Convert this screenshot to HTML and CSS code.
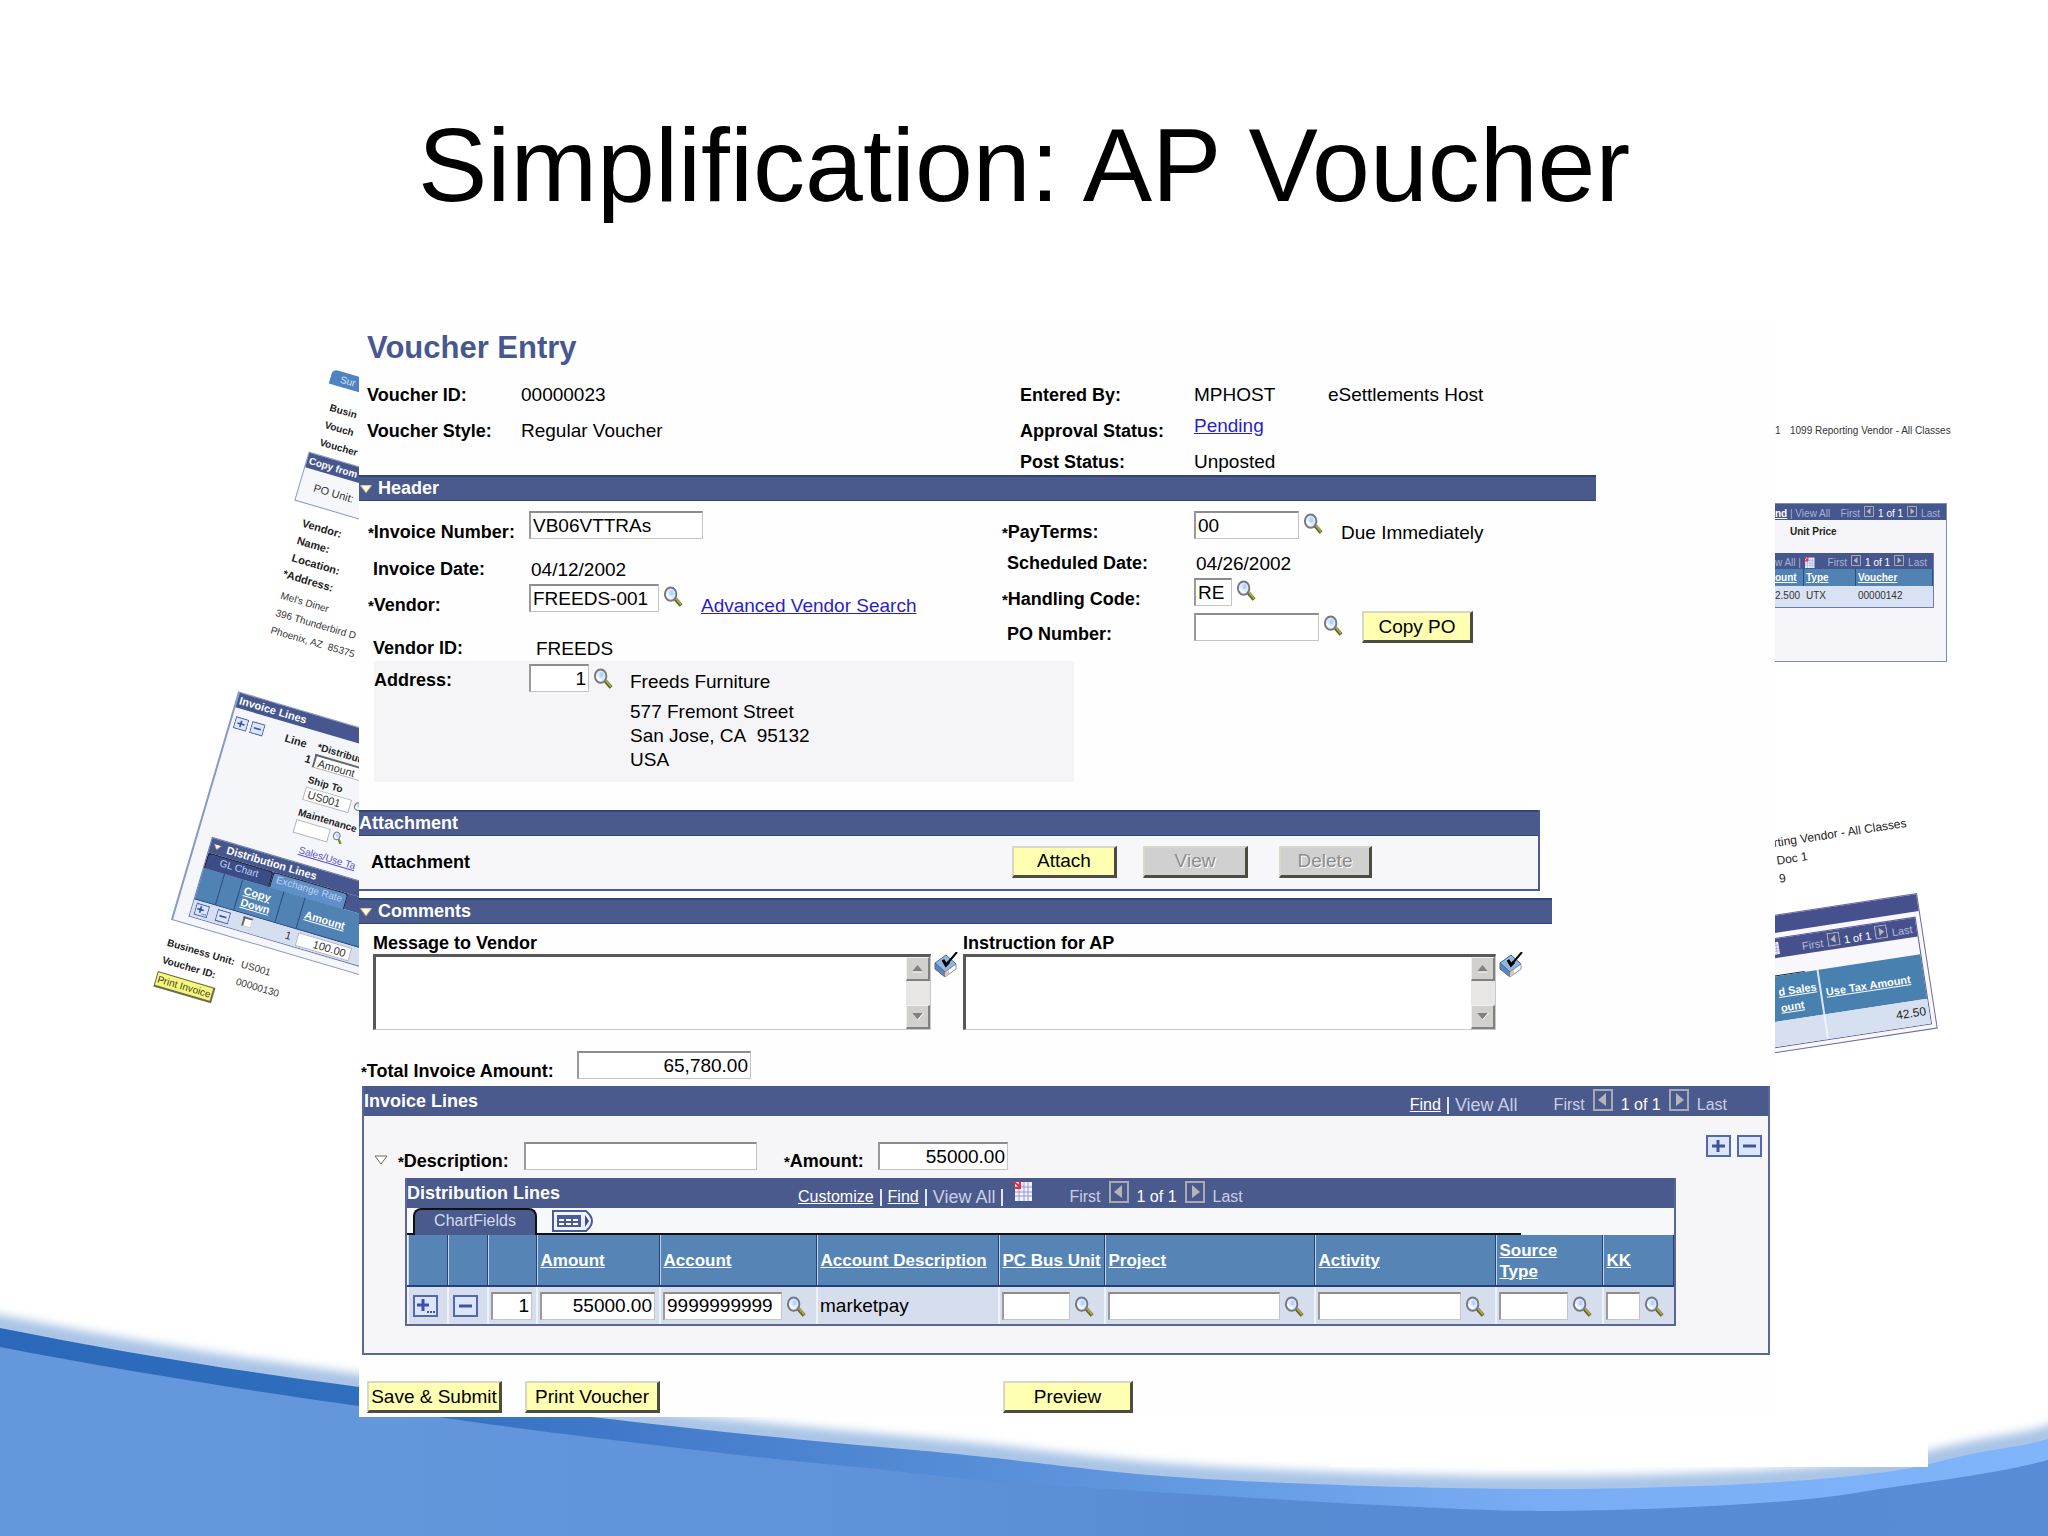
FILE: index.html
```html
<!DOCTYPE html>
<html lang="en">
<head>
  <meta charset="UTF-8">
  <title>Simplification: AP Voucher</title>
  <link rel="stylesheet" href="styles.css">
</head>
<body>
  <svg class="defs" width="0" height="0">
    <symbol id="mag" viewBox="0 0 22 22">
      <path d="M13 13l6 7" stroke="#5c6420" stroke-width="4"/>
      <path d="M13 12l6 7" stroke="#a9a94a" stroke-width="2"/>
      <ellipse cx="8" cy="8" rx="6" ry="7" fill="#dcebff" stroke="#77777f" stroke-width="2"/>
      <path d="M7 4h4v5H7z" fill="#b4d4ff"/>
      <path d="M4 8q1 4 5 4" stroke="#fff" stroke-width="2" fill="none"/>
    </symbol>
    <symbol id="spell" viewBox="0 0 26 26">
      <path d="M2 11l11-8 10 9-11 8z" fill="#8fb8e0" stroke="#4a6a96"/>
      <path d="M2 11l10 9v5L2 17z" fill="#5c86b8" stroke="#4a6a96"/>
      <path d="M12 20l11-8v5l-11 8z" fill="#fff" stroke="#8a8aa6"/>
      <path d="M12 21l4-3v4l-4 3z" fill="#f0c0a0"/>
      <path d="M10 8l3 5L24 0" stroke="#000" stroke-width="2" fill="none"/>
      <path d="M10 8l3 5 3-3" stroke="#000" stroke-width="3" fill="none"/>
    </symbol>
    <symbol id="grid" viewBox="0 0 20 20">
      <path d="M2 1h17v19H2z" fill="#f4f4ff"/>
      <path d="M2 6h17M2 11h17M2 15h17M6 1v19M11 1v19M15 1v19" stroke="#8f97dc" stroke-width="1"/>
      <path d="M0 0l7 6M7 0v7H1" stroke="#e0303c" stroke-width="2" fill="none"/>
    </symbol>
    <symbol id="prev" viewBox="0 0 20 22">
      <path d="M1 1h18v20H1z" fill="none" stroke="#a9a9b4" stroke-width="2"/>
      <path d="M13 4v13l-8-6z" fill="#b5b5b5"/>
    </symbol>
    <symbol id="next" viewBox="0 0 20 22">
      <path d="M1 1h18v20H1z" fill="none" stroke="#a9a9b4" stroke-width="2"/>
      <path d="M7 4v13l8-6z" fill="#b5b5b5"/>
    </symbol>
    <symbol id="plus" viewBox="0 0 25 22">
      <path d="M1 1h23v20H1z" fill="#dbe6fb" stroke="#5468b0" stroke-width="2"/>
      <path d="M6 11h13M12 5v12" stroke="#40549c" stroke-width="3"/>
    </symbol>
    <symbol id="plusdots" viewBox="0 0 25 22">
      <path d="M1 1h23v20H1z" fill="#dbe6fb" stroke="#5468b0" stroke-width="2"/>
      <path d="M4 10h12M10 4v12" stroke="#3c4cb0" stroke-width="3"/>
      <path d="M14 17h2M17 17h2M20 17h2" stroke="#40549c" stroke-width="2"/>
    </symbol>
    <symbol id="minus" viewBox="0 0 25 22">
      <path d="M1 1h23v20H1z" fill="#dbe6fb" stroke="#5468b0" stroke-width="2"/>
      <path d="M6 11h13" stroke="#40549c" stroke-width="3"/>
    </symbol>
    <symbol id="open" viewBox="0 0 12 8">
      <path d="M0 0h12L6 8z" fill="#fff8d8" stroke="#a8a080" stroke-width="1"/>
    </symbol>
    <symbol id="up" viewBox="0 0 24 24">
      <path d="M6 15l6-7 6 7z" fill="#808080"/><path d="M6 16h12" stroke="#fff"/>
    </symbol>
    <symbol id="down" viewBox="0 0 24 24">
      <path d="M6 8h12l-6 7z" fill="#808080"/><path d="M12 16l7-8" stroke="#fff"/>
    </symbol>
  </svg>

  <div class="slide">
    <svg class="wave" viewBox="0 0 2048 256" preserveAspectRatio="none">
      <defs>
        <linearGradient id="band">
          <stop offset="0" stop-color="#2b68ba"/>
          <stop offset=".18" stop-color="#2f6fbd"/>
          <stop offset=".3" stop-color="#4179c9"/>
          <stop offset=".55" stop-color="#6096de"/>
          <stop offset=".75" stop-color="#78adf4"/>
          <stop offset="1" stop-color="#80b4fb"/>
        </linearGradient>
        <linearGradient id="sea">
          <stop offset="0" stop-color="#6598db"/>
          <stop offset=".4" stop-color="#6093da"/>
          <stop offset=".6" stop-color="#588bd2"/>
          <stop offset="1" stop-color="#588cd6"/>
        </linearGradient>
        <filter id="soft" x="-5%" y="-40%" width="110%" height="180%"><feGaussianBlur stdDeviation="5"/></filter>
      </defs>
      <path d="M-40 38L0 46C120 70 230 88 359 105S500 124 601 136S800 158 914 168S1080 188 1176 195S1440 207 1541 207S1850 202 1929 182S2010 168 2048 157L2090 143" fill="none" stroke="#a9c4e6" stroke-width="22" filter="url(#soft)"/>
      <path d="M0 48C120 72 230 90 359 107S500 126 601 138S800 160 914 170S1080 190 1176 197S1440 209 1541 209S1850 204 1929 184S2010 170 2048 159V256H0z" fill="url(#band)"/>
      <path d="M0 67C120 90 230 108 359 126S500 146 588 157S760 178 836 185S960 200 1045 205S1440 231 1541 231S1790 224 1855 213S1990 196 2048 180V256H0z" fill="url(#sea)"/>
      <path d="M1330 90h598v97h-598z" fill="#fff"/>
    </svg>

    <h1 class="slide-title">Simplification: AP Voucher</h1>

    <div class="collage">
      <div class="side">
        <div class="doc doc-left">
          <div class="tab-top">Sur</div>
          <div class="lines first">
            <b>Busin</b>
            <b>Vouch</b>
            <b>Voucher</b>
          </div>
          <div class="copybox">
            <div class="doc-bar">Copy from</div>
            <p>PO Unit:</p>
          </div>
          <div class="lines vendor">
            <b>Vendor:</b>
            <b>Name:</b>
            <b>Location:</b>
            <b class="req">*Address:</b>
          </div>
          <div class="lines address">
            <span>Mel's Diner</span>
            <span>396 Thunderbird D</span>
            <span>Phoenix, AZ&nbsp; 85375</span>
          </div>
          <div class="linebox">
            <div class="doc-bar">Invoice Lines</div>
            <div class="lb-grid">
              <div class="lb-icons">
                <svg><use href="#plus"/></svg><svg><use href="#minus"/></svg>
              </div>
              <div class="lb-line"><b>Line</b><b class="num">1</b></div>
              <div class="lb-fields">
                <b>*Distribut</b>
                <div class="mini select">Amount</div>
                <b class="gap">Ship To</b>
                <div class="pair"><div class="mini">US001</div><svg><use href="#mag"/></svg></div>
                <b class="gap">Maintenance</b>
                <div class="pair"><div class="mini short"></div><svg><use href="#mag"/></svg></div>
                <a href="#" class="tax">Sales/Use Ta</a>
              </div>
            </div>
            <div class="lb-table">
              <div class="doc-bar"><svg class="tri"><use href="#open"/></svg> Distribution Lines</div>
              <div class="lb-tabs"><span class="on">GL Chart</span><span>Exchange Rate</span></div>
              <div class="lb-head"><span></span><span></span><a href="#">Copy<br>Down</a><span></span><a href="#">Amount</a></div>
              <div class="lb-row">
                <span><svg><use href="#plusdots"/></svg></span>
                <span><svg><use href="#minus"/></svg></span>
                <span><i class="tick"></i></span>
                <span class="r">1</span>
                <span><i class="mini amt">100.00</i></span>
              </div>
            </div>
          </div>
          <div class="doc-foot">
            <b>Business Unit:</b><span>US001</span>
            <b>Voucher ID:</b><span>00000130</span>
          </div>
          <button type="button" class="mini-btn">Print Invoice</button>
        </div>
      </div>

      <form class="panel">
        <h2>Voucher Entry</h2>
        <div class="info">
          <b>Voucher ID:</b><span>00000023</span>
          <b>Entered By:</b><span>MPHOST</span><span>eSettlements Host</span>
          <b>Voucher Style:</b><span>Regular Voucher</span>
          <b>Approval Status:</b><a href="#" class="pending">Pending</a><span></span>
          <b></b><span></span>
          <b>Post Status:</b><span>Unposted</span><span></span>
        </div>

        <div class="bar bar-header"><svg class="tri"><use href="#open"/></svg>Header</div>

        <div class="fields">
          <div class="col-left">
            <div class="row"><label for="inv"><i>*</i>Invoice Number:</label><input id="inv" class="w174" value="VB06VTTRAs"></div>
            <div class="row"><b>Invoice Date:</b><span class="val">04/12/2002</span></div>
            <div class="row"><label for="ven"><i>*</i>Vendor:</label><input id="ven" class="w130" value="FREEDS-001"><svg class="mag"><use href="#mag"/></svg><a href="#" class="adv">Advanced Vendor Search</a></div>
            <div class="row"><b>Vendor ID:</b><span class="val in">FREEDS</span></div>
          </div>
          <div class="col-right">
            <div class="row"><label for="pay"><i>*</i>PayTerms:</label><input id="pay" class="w105" value="00"><svg class="mag"><use href="#mag"/></svg><span class="due">Due Immediately</span></div>
            <div class="row"><b>Scheduled Date:</b><span class="val">04/26/2002</span></div>
            <div class="row"><label for="hand"><i>*</i>Handling Code:</label><input id="hand" class="w38" value="RE"><svg class="mag"><use href="#mag"/></svg></div>
            <div class="row"><label for="po">PO Number:</label><input id="po" class="w125"><svg class="mag"><use href="#mag"/></svg><button type="button" class="btn copy">Copy PO</button></div>
          </div>
        </div>

        <div class="address-box">
          <label for="addr">Address:</label>
          <input id="addr" class="num w60" value="1"><svg class="mag"><use href="#mag"/></svg>
          <div class="postal">
            <p>Freeds Furniture</p>
            <p>577 Fremont Street<br>San Jose, CA&nbsp; 95132<br>USA</p>
          </div>
        </div>

        <div class="attach">
          <div class="bar">Attachment</div>
          <div class="attach-body">
            <b>Attachment</b>
            <button type="button" class="btn w105">Attach</button>
            <button type="button" class="btn w105" disabled>View</button>
            <button type="button" class="btn w93" disabled>Delete</button>
          </div>
        </div>

        <div class="bar bar-comments"><svg class="tri"><use href="#open"/></svg>Comments</div>
        <div class="comments">
          <div class="message">
            <label for="msg">Message to Vendor</label>
            <div class="area"><div class="box"><textarea id="msg"></textarea><div class="scroll"><svg><use href="#up"/></svg><svg><use href="#down"/></svg></div></div><svg class="spell"><use href="#spell"/></svg></div>
          </div>
          <div class="instruction">
            <label for="ins">Instruction for AP</label>
            <div class="area"><div class="box"><textarea id="ins"></textarea><div class="scroll"><svg><use href="#up"/></svg><svg><use href="#down"/></svg></div></div><svg class="spell"><use href="#spell"/></svg></div>
          </div>
        </div>

        <div class="total"><label for="tot"><i>*</i>Total Invoice Amount:</label><input id="tot" class="num w174" value="65,780.00"></div>

        <div class="invoice">
          <div class="bar bar-lines">
            <span>Invoice Lines</span>
            <div class="nav">
              <a href="#">Find</a><u></u><span class="all">View All</span>
              <div class="pager"><span>First</span><svg><use href="#prev"/></svg><em>1 of 1</em><svg><use href="#next"/></svg><span>Last</span></div>
            </div>
          </div>
          <div class="line-fields">
            <svg class="fold" viewBox="0 0 14 10"><path d="M1 1h12L7 9z" fill="#fff" stroke="#6c6c5c" stroke-width="1"/></svg>
            <label for="desc"><i>*</i>Description:</label><input id="desc" class="w233">
            <label for="amt" class="amt"><i>*</i>Amount:</label><input id="amt" class="num w130" value="55000.00">
            <div class="addrem"><svg><use href="#plus"/></svg><svg><use href="#minus"/></svg></div>
          </div>
          <div class="dist">
            <div class="bar bar-lines">
              <span class="dist-title">Distribution Lines</span>
              <div class="nav">
                <a href="#">Customize</a><u></u><a href="#">Find</a><u></u><span class="all">View All</span><u></u><svg class="gridicon"><use href="#grid"/></svg>
                <div class="pager"><span>First</span><svg><use href="#prev"/></svg><em>1 of 1</em><svg><use href="#next"/></svg><span>Last</span></div>
              </div>
            </div>
            <div class="tabs">
              <span class="tab">ChartFields</span>
              <svg class="showall" viewBox="0 0 41 22"><path d="M1 1h33q6 5 6 10t-6 10H1z" fill="#eef4ff" stroke="#4a5a9c" stroke-width="2"/><path d="M5 5h24v12H5z" fill="#4a5a9c"/><path d="M7 9h5v2H7zM14 9h5v2h-5zM21 9h5v2h-5zM7 13h5v2H7zM14 13h5v2h-5zM21 13h5v2h-5z" fill="#fff"/><path d="M33 5v12l4-6z" fill="#3a4a9c"/></svg>
            </div>
            <table>
              <colgroup><col class="c1"><col class="c1"><col class="c3"><col class="c4"><col class="c5"><col class="c6"><col class="c7"><col class="c8"><col class="c9"><col class="c10"><col></colgroup>
              <thead>
                <tr>
                  <th></th><th></th><th></th>
                  <th id="h-amt"><a href="#">Amount</a></th>
                  <th id="h-acc"><a href="#">Account</a></th>
                  <th><a href="#">Account Description</a></th>
                  <th id="h-pc"><a href="#">PC Bus Unit</a></th>
                  <th id="h-prj"><a href="#">Project</a></th>
                  <th id="h-act"><a href="#">Activity</a></th>
                  <th id="h-src"><a href="#">Source<br>Type</a></th>
                  <th id="h-kk"><a href="#">KK</a></th>
                </tr>
              </thead>
              <tbody>
                <tr>
                  <td><svg class="pm"><use href="#plusdots"/></svg></td>
                  <td><svg class="pm"><use href="#minus"/></svg></td>
                  <td><div class="cell"><input class="num" value="1"></div></td>
                  <td><div class="cell"><input class="num" value="55000.00" aria-labelledby="h-amt"></div></td>
                  <td><div class="cell"><input value="9999999999" aria-labelledby="h-acc"><svg class="mag"><use href="#mag"/></svg></div></td>
                  <td>marketpay</td>
                  <td><div class="cell"><input aria-labelledby="h-pc"><svg class="mag"><use href="#mag"/></svg></div></td>
                  <td><div class="cell"><input aria-labelledby="h-prj"><svg class="mag"><use href="#mag"/></svg></div></td>
                  <td><div class="cell"><input aria-labelledby="h-act"><svg class="mag"><use href="#mag"/></svg></div></td>
                  <td><div class="cell"><input aria-labelledby="h-src"><svg class="mag"><use href="#mag"/></svg></div></td>
                  <td><div class="cell"><input aria-labelledby="h-kk"><svg class="mag"><use href="#mag"/></svg></div></td>
                </tr>
              </tbody>
            </table>
          </div>
        </div>

        <div class="actions">
          <button type="button" class="btn w135">Save &amp; Submit</button>
          <button type="button" class="btn w135">Print Voucher</button>
          <button type="button" class="btn preview">Preview</button>
        </div>
      </form>

      <div class="side right">
        <div class="doc-flat">
          <p class="caption"><span>1</span>1099 Reporting Vendor - All Classes</p>
          <div class="flat-box">
            <div class="flat-bar"><a href="#">nd</a> | View All<div class="mini-pager"><span>First</span><svg><use href="#prev"/></svg><em>1 of 1</em><svg><use href="#next"/></svg><span>Last</span></div></div>
            <b class="unit">Unit Price</b>
            <div class="flat-inner">
              <div class="flat-bar">w All |<svg class="g"><use href="#grid"/></svg><div class="mini-pager"><span>First</span><svg><use href="#prev"/></svg><em>1 of 1</em><svg><use href="#next"/></svg><span>Last</span></div></div>
              <div class="flat-head"><a href="#">ount</a><a href="#">Type</a><a href="#">Voucher</a></div>
              <div class="flat-row"><span>2.500</span><span>UTX</span><span>00000142</span></div>
            </div>
          </div>
        </div>
        <div class="doc doc-right">
          <p class="end">rting Vendor - All Classes</p>
          <p>Doc 1</p>
          <p>9</p>
          <div class="tax-box">
            <div class="tax-top"></div>
            <div class="tax-inner">
              <div class="tax-bar"><svg class="g"><use href="#grid"/></svg><span>First</span><svg><use href="#prev"/></svg><em>1 of 1</em><svg><use href="#next"/></svg><span>Last</span></div>
              <div class="tax-strip"></div>
              <div class="tax-head"><span><a href="#">d Sales</a><br><a href="#">ount</a></span><span><a href="#">Use Tax Amount</a></span></div>
              <div class="tax-row"><span></span><span>42.50</span></div>
            </div>
          </div>
        </div>
      </div>
    </div>
  </div>
</body>
</html>
```
FILE: styles.css
```css
* {
  box-sizing: border-box;
}

body {
  margin: 0;
  background: #fff;
  color: #000;
  font-family: "Liberation Sans", Arial, sans-serif;
  font-size: 19px;
}

h1, h2, p {
  margin: 0;
}

i, em {
  font-style: normal;
}

.defs {
  position: absolute;
}

svg {
  display: block;
  flex: none;
}

.slide {
  position: relative;
  min-height: 100vh;
  overflow: hidden;
}

.wave {
  position: absolute;
  left: 0;
  bottom: 0;
  width: 100%;
  height: 256px;
}

.slide-title {
  height: 320px;
  padding-top: 105px;
  text-align: center;
  font-size: 104px;
  line-height: 120px;
  font-weight: normal;
}

.collage {
  position: relative;
  display: grid;
  grid-template-columns: 359px 1fr 273px;
}

/* main panel */
.panel {
  min-width: 0;
  padding: 10px 5px 4px 0;
  background: #fefeff;
}

.panel h2 {
  padding-left: 8px;
  margin-bottom: 11px;
  color: #46588f;
  font-size: 31px;
  line-height: 36px;
}

.info {
  display: grid;
  grid-template-columns: 154px 499px 174px 134px 1fr;
  grid-template-rows: 36px 36px 26px;
  align-items: center;
  padding-left: 8px;
}

label, .panel b {
  font-size: 18px;
  line-height: 20px;
  font-weight: bold;
}

.panel a {
  color: #2a1fc8;
}

.pending {
  align-self: start;
  line-height: 26px;
}

.bar {
  display: flex;
  align-items: center;
  height: 26px;
  background: #4a5a8d;
  border-top: 2px solid #2f4579;
  border-bottom: 1px solid #2f4579;
  color: #fff;
  font-size: 18px;
  font-weight: bold;
}

.tri {
  width: 12px;
  height: 8px;
  margin: 0 6px 0 1px;
}

.bar-header {
  margin-right: 174px;
}

.panel input {
  height: 28px;
  padding: 0 2px;
  border: 1px solid #c4c4c4;
  border-top: 2px solid #8c8c8c;
  border-left: 2px solid #9a9a9a;
  background: #fff;
  font: 19px "Liberation Sans", Arial, sans-serif;
}

.panel input.num {
  text-align: right;
}

.panel .w38 { width: 38px; }
.panel .w60 { width: 60px; }
.panel .w93 { width: 93px; }
.panel .w105 { width: 105px; }
.panel .w125 { width: 125px; }
.panel .w130 { width: 130px; }
.panel .w135 { width: 135px; }
.panel .w174 { width: 174px; }
.panel .w233 { width: 233px; }

.mag {
  width: 21px;
  height: 22px;
  margin: 2px 0 0 4px;
}

.fields {
  display: grid;
  grid-template-columns: 634px 1fr;
  padding: 10px 0 0 9px;
}

.col-left, .col-right {
  display: grid;
}

.col-left {
  grid-template-rows: 48px 25px 54px 23px;
}

.col-right {
  grid-template-rows: 42px 25px 35px 48px;
}

.row {
  display: flex;
  align-items: flex-start;
}

.row label, .row > b {
  width: 161px;
  padding-left: 5px;
}

.col-right .row label, .col-right .row > b {
  width: 192px;
}

label i {
  margin-left: -5px;
  font-size: 15px;
}

.row label {
  padding-top: 11px;
}

.val {
  line-height: 22px;
  padding-left: 2px;
}

.val.in {
  padding-left: 7px;
}

.adv, .due {
  padding-top: 12px;
  margin-left: 17px;
  line-height: 20px;
}

.btn {
  height: 32px;
  padding: 0;
  border: 2px solid #4c4c42;
  border-top-color: #d8d8c8;
  border-left-color: #d8d8c8;
  border-bottom-width: 3px;
  border-right-width: 3px;
  background: #ffffb2;
  color: #000;
  font: 19px "Liberation Sans", Arial, sans-serif;
  white-space: nowrap;
}

.btn:disabled {
  background: #d0d0d0;
  color: #8c8c8c;
  text-shadow: 1px 1px #fff;
}

.copy {
  width: 111px;
  margin: -2px 0 0 18px;
}

.address-box {
  display: flex;
  align-items: flex-start;
  width: 700px;
  height: 121px;
  margin-left: 15px;
  padding-top: 3px;
  background: #f5f5f8;
}

.address-box label {
  width: 155px;
  padding-top: 6px;
}

.address-box .mag {
  margin-top: 4px;
}

.postal {
  margin-left: 16px;
  padding-top: 6px;
  line-height: 24px;
}

.postal p + p {
  margin-top: 6px;
}

.attach {
  margin: 28px 230px 0 0;
  border: 2px solid #4a5a98;
  border-width: 0 2px 2px 0;
  background: #f7f6f9;
}

.attach-body {
  display: flex;
  align-items: center;
  height: 53px;
  padding: 0 0 2px 12px;
}

.attach-body b {
  width: 641px;
}

.attach-body .btn + .btn {
  margin-left: 26px;
}

.attach-body .w93.btn {
  margin-left: 31px;
}

.bar-comments {
  margin: 7px 218px 0 0;
}

.comments {
  display: grid;
  grid-template-columns: 590px 561px;
  padding: 8px 0 0 14px;
}

.comments label {
  display: block;
  line-height: 22px;
}

.area {
  display: flex;
}

.box {
  display: flex;
  flex: 1;
  height: 76px;
  border: 1px solid #c8c8c8;
  border-top: 3px solid #585858;
  border-left: 3px solid #585858;
}

.message .area {
  width: 586px;
}

textarea {
  flex: 1;
  border: 0;
  resize: none;
  background: #fff;
}

.scroll {
  display: flex;
  flex-direction: column;
  justify-content: space-between;
  width: 24px;
  background: #e8e6e4;
}

.scroll svg {
  width: 24px;
  height: 24px;
  background: #d2d0cd;
  border: 1px solid #f0f0f0;
  border-right: 2px solid #808080;
  border-bottom: 2px solid #808080;
}

.spell {
  width: 26px;
  height: 26px;
  margin: -2px 0 0 2px;
}

.total {
  display: flex;
  align-items: flex-start;
  margin-top: 21px;
  padding-left: 7px;
}

.total label {
  width: 211px;
  padding-top: 10px;
}

.invoice {
  margin: 4px 0 0 3px;
  padding-bottom: 27px;
  border: 2px solid #5a6898;
  border-top: 0;
  background: #f6f6f8;
}

.bar-lines {
  height: 30px;
  justify-content: space-between;
  border: 0;
}

.nav {
  display: flex;
  align-items: center;
  padding: 8px 41px 0 0;
  font-size: 16px;
  line-height: 20px;
  font-weight: normal;
  color: #c9cfe2;
}

.nav a {
  color: #fff;
}

.nav .all {
  font-size: 18px;
}

.nav u {
  width: 2px;
  height: 17px;
  margin: 0 6px;
  background: #e4e8f4;
}

.pager {
  display: flex;
  align-items: center;
  margin-left: 36px;
}

.pager svg {
  width: 20px;
  height: 22px;
  margin: -10px 8px 0;
}

.pager em {
  color: #fff;
}

.line-fields {
  display: flex;
  align-items: flex-start;
  padding: 26px 6px 6px 10px;
}

.fold {
  width: 14px;
  height: 10px;
  margin: 13px 15px 0 0;
}

.line-fields label {
  width: 121px;
  padding-top: 9px;
}

.line-fields label.amt {
  width: 89px;
  margin-left: 32px;
}

.addrem {
  display: flex;
  gap: 6px;
  margin: -7px 0 0 auto;
}

.addrem svg, .pm {
  width: 25px;
  height: 22px;
}

.dist {
  margin: 0 92px 0 41px;
  border: 2px solid #5a6898;
  border-top: 0;
  background: #f6f8fa;
}

.dist .bar {
  justify-content: flex-start;
}

.dist-title {
  width: 391px;
}

.gridicon {
  width: 20px;
  height: 20px;
  margin: -12px 0 0 4px;
}

.tabs {
  display: flex;
  width: 1114px;
  height: 27px;
  padding-left: 6px;
  border-bottom: 2px solid #111;
}

.tab {
  width: 124px;
  height: 27px;
  border: 2px solid #111;
  border-bottom: 0;
  border-radius: 8px 8px 0 0;
  background: #4a5a8d;
  color: #d4dcf0;
  font-size: 16px;
  line-height: 22px;
  text-align: center;
}

.showall {
  width: 41px;
  height: 22px;
  margin: 2px 0 0 15px;
}

.panel table {
  width: 100%;
  table-layout: fixed;
  border-collapse: collapse;
}

.c1 { width: 40px; }
.c3 { width: 49px; }
.c4 { width: 123px; }
.c5 { width: 157px; }
.c6 { width: 182px; }
.c7 { width: 106px; }
.c8 { width: 210px; }
.c9 { width: 181px; }
.c10 { width: 107px; }

.panel th {
  height: 51px;
  padding: 1px 0 0 3px;
  background: #5685b5;
  border-left: 1px solid #c4d4ea;
  border-bottom: 2px solid #24407c;
  box-shadow: inset -1px 0 #24407c;
  font-size: 17px;
  line-height: 21px;
  text-align: left;
  white-space: nowrap;
}

.panel th a {
  color: #fff;
}

.panel td {
  height: 38px;
  padding: 0 4px 0 2px;
  background: #d6deee;
  border-left: 2px solid #eef2fa;
}

.pm {
  margin: 0 0 0 2px;
}

.cell {
  display: flex;
}

.cell input {
  flex: 1;
  min-width: 0;
}

.cell .mag {
  margin: 4px 5px 0 4px;
}

.actions {
  display: flex;
  padding: 26px 0 0 8px;
}

.actions .btn + .btn {
  margin-left: 23px;
}

.actions .preview.btn {
  width: 130px;
  margin-left: 343px;
}

/* overlapping page copies either side of the panel */
.side {
  position: relative;
  overflow: hidden;
  color: #333;
  font-size: 11px;
}

.side b {
  color: #222;
}

.doc {
  position: absolute;
}

.doc-left {
  left: 333px;
  top: 49px;
  width: 240px;
  transform: rotate(16.4deg);
  transform-origin: top left;
}

.tab-top {
  width: 80px;
  height: 15px;
  padding-left: 10px;
  border-radius: 5px 5px 0 0;
  background: #4f82c0;
  color: #d4e4fa;
  font-size: 10px;
  line-height: 15px;
}

.lines {
  display: flex;
  flex-direction: column;
  padding-left: 14px;
  line-height: 18px;
}

.lines.first {
  padding: 14px 0 3px 8px;
  font-size: 10px;
}

.lines.vendor {
  padding-top: 10px;
}

.lines.address {
  padding-top: 4px;
  font-size: 10px;
}

.lines .req {
  margin-left: -4px;
}

.doc-bar {
  display: flex;
  align-items: center;
  height: 15px;
  padding-left: 2px;
  background: #46568e;
  color: #fff;
  font-weight: bold;
  line-height: 15px;
}

.copybox {
  height: 51px;
  border: 1px solid #8c98c4;
  background: #f6f7fa;
}

.copybox .doc-bar {
  font-size: 10px;
}

.copybox p {
  padding-left: 14px;
  line-height: 34px;
}

.linebox {
  height: 238px;
  margin-top: 59px;
  border: 1px solid #8c98c4;
  border-left-width: 2px;
  background: #f5f6fa;
}

.lb-grid {
  display: grid;
  grid-template-columns: 56px 34px 1fr;
  height: 131px;
  padding-top: 8px;
  line-height: 14px;
}

.lb-icons {
  display: flex;
  gap: 3px;
  padding-left: 3px;
}

.lb-icons svg, .lb-row svg {
  width: 14px;
  height: 13px;
}

.lb-line, .lb-fields {
  display: flex;
  flex-direction: column;
}

.lb-fields b {
  font-size: 10px;
}

.lb-line .num {
  padding-left: 25px;
}

.lb-fields .gap {
  margin-top: 6px;
}

.mini {
  width: 48px;
  height: 14px;
  padding-left: 3px;
  border: 1px solid #b4b4bc;
  background: #fff;
  line-height: 13px;
}

.mini.short {
  width: 36px;
}

.mini.select {
  width: 90px;
  border-top: 2px solid #666;
  border-left: 2px solid #666;
  line-height: 12px;
}

.pair {
  display: flex;
  gap: 3px;
}

.pair svg {
  width: 12px;
  height: 13px;
}

.tax {
  margin: 8px 0 0 11px;
  color: #5a50d0;
  font-size: 10px;
}

.lb-table {
  margin-left: 14px;
  border: 1px solid #6c7cb0;
  border-right: 0;
}

.lb-table .tri {
  width: 8px;
  height: 5px;
}

.lb-tabs {
  display: flex;
  height: 16px;
  background: #46568e;
}

.lb-tabs span {
  width: 78px;
  border: 1px solid #222;
  border-bottom: 0;
  border-radius: 4px 4px 0 0;
  background: #5e8fc8;
  color: #bcd4f4;
  font-size: 10px;
  text-align: center;
  white-space: nowrap;
}

.lb-tabs .on {
  width: 68px;
  background: #3c4c86;
}

.lb-head, .lb-row {
  display: grid;
  grid-template-columns: 22px 19px 43px 22px 1fr;
}

.lb-head {
  height: 33px;
  background: #5082b4;
  border-bottom: 1px solid #2c4c84;
}

.lb-head > * {
  display: flex;
  align-items: center;
  padding-left: 4px;
  border-right: 1px solid #2c4c84;
  color: #fff;
  font-weight: bold;
  line-height: 12px;
}

.lb-row {
  height: 17px;
  background: #d6dff0;
}

.lb-row > span {
  padding: 2px 3px 0;
}

.lb-row .r {
  text-align: right;
}

.tick {
  display: block;
  width: 10px;
  height: 10px;
  margin-left: 8px;
  border: 1px solid #ccc;
  border-top: 2px solid #666;
  border-left: 2px solid #666;
  background: #fff;
}

.mini.amt {
  display: block;
  width: 56px;
  padding-right: 4px;
  text-align: right;
}

.doc-foot {
  display: grid;
  grid-template-columns: 77px 1fr;
  padding: 14px 0 0 3px;
  font-size: 10px;
  line-height: 18px;
}

.mini-btn {
  height: 16px;
  margin: 3px 0 0 2px;
  padding: 0 1px;
  border: 1px solid #6a6a50;
  border-right-width: 2px;
  border-bottom-width: 2px;
  background: #f6f67c;
  color: #44442c;
  font: 10px "Liberation Sans", Arial, sans-serif;
}

.doc-flat {
  padding: 104px 101px 0 0;
  font-size: 10px;
}

.caption {
  display: flex;
  gap: 10px;
  line-height: 14px;
  white-space: nowrap;
}

.caption span {
  width: 5px;
}

.flat-box {
  height: 159px;
  margin-top: 65px;
  border: 1px solid #7c8cb4;
  border-left: 0;
  background: #f6f6fa;
}

.flat-bar {
  display: flex;
  align-items: center;
  height: 16px;
  padding: 3px 6px 0 0;
  background: #46568e;
  color: #a8b2d2;
  white-space: pre;
}

.flat-bar a {
  color: #fff;
  font-weight: bold;
}

.mini-pager {
  display: flex;
  align-items: center;
  gap: 4px;
  margin-left: auto;
}

.mini-pager svg {
  width: 10px;
  height: 11px;
  margin-top: -4px;
}

.mini-pager em {
  color: #fff;
}

.g {
  width: 11px;
  height: 11px;
  margin-left: 3px;
}

.unit {
  display: block;
  padding-left: 15px;
  line-height: 24px;
  height: 33px;
}

.flat-inner {
  margin-right: 12px;
  border: 1px solid #6c7cb0;
  border-width: 0 1px 1px 0;
}

.flat-head, .flat-row {
  display: grid;
  grid-template-columns: 29px 52px 1fr;
  line-height: 17px;
}

.flat-head {
  background: #5082b4;
}

.flat-head a {
  color: #fff;
  font-weight: bold;
  border-right: 1px solid #2c4c84;
}

.flat-row {
  height: 21px;
  line-height: 20px;
  background: #d8e2f2;
}

.flat-head > * + *, .flat-row > * + * {
  padding-left: 2px;
}

.doc-right {
  right: 131px;
  top: 493px;
  width: 240px;
  color: #222;
  font-size: 12px;
  line-height: 18px;
  transform: rotate(-8.7deg);
  transform-origin: right 80px;
}

.doc-right p {
  padding-left: 106px;
}

.doc-right .end {
  padding: 0;
  text-align: right;
}

.tax-box {
  height: 137px;
  margin-top: 26px;
  padding-right: 4px;
  border: 1px solid #6c6ca4;
  background: #f8f8fc;
}

.tax-top {
  height: 17px;
  margin-right: -4px;
  margin-bottom: 5px;
  background: #46508c;
}

.tax-inner {
  border: 1px solid #5c5c98;
}

.tax-bar {
  display: flex;
  align-items: center;
  justify-content: flex-end;
  gap: 4px;
  height: 19px;
  padding: 3px 4px 0 0;
  background: #46508c;
  color: #b4bcd8;
  font-size: 11px;
}

.tax-bar em {
  color: #fff;
}

.tax-bar svg {
  width: 13px;
  height: 14px;
  margin-top: -4px;
}

.tax-bar .g {
  margin-right: 18px;
}

.tax-strip {
  width: 115px;
  height: 18px;
  border-bottom: 1px solid #222;
}

.tax-head, .tax-row {
  display: grid;
  grid-template-columns: 1fr 105px;
}

.tax-head {
  height: 45px;
  align-items: stretch;
  background: #4880b0;
  font-size: 11px;
  line-height: 16px;
}

.tax-head span {
  display: block;
  padding-top: 8px;
}

.tax-head span:first-child {
  padding-left: 86px;
}

.tax-head span + span {
  padding: 15px 0 0 4px;
  border-left: 2px solid #dce6f4;
}

.tax-head a {
  color: #fff;
  font-weight: bold;
}

.tax-row {
  height: 25px;
  background: #d6e0f0;
  line-height: 25px;
}

.tax-row span + span {
  padding-right: 3px;
  border-left: 2px solid #eef2fa;
  text-align: right;
}
```
